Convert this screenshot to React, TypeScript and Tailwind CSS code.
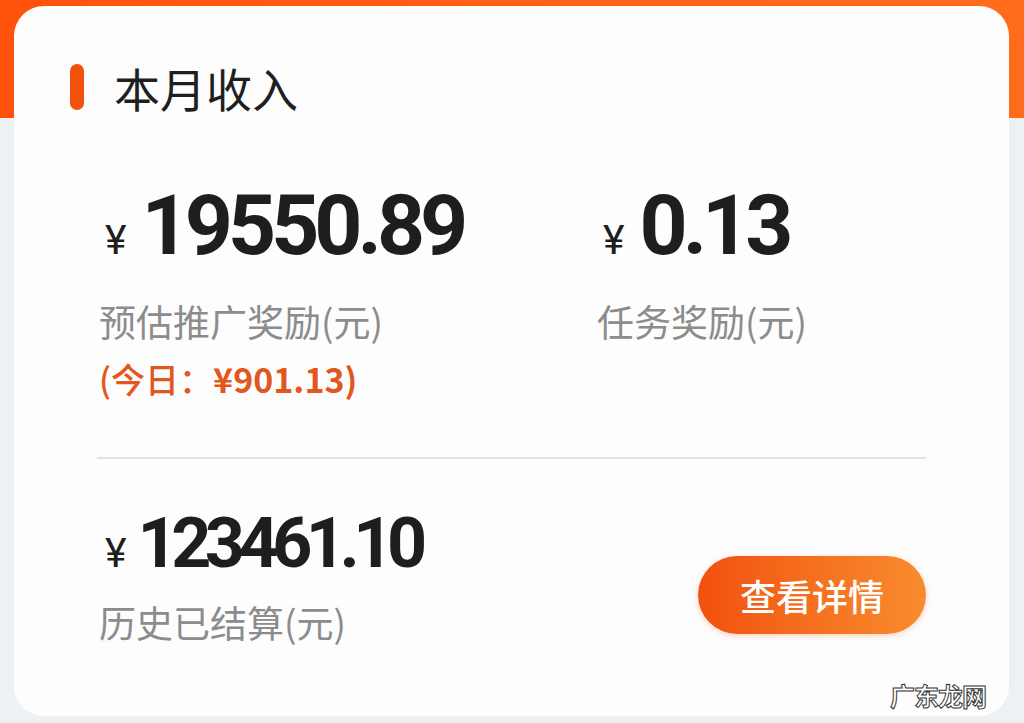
import React from "react";

const cjk = "font-['Noto_Sans_CJK_SC','Noto_Sans',sans-serif]";
const num = "font-['Roboto','Liberation_Sans',sans-serif]";

const Amount: React.FC<{ value: string; size: "lg" | "md" }> = ({ value, size }) => (
  <div className="flex items-baseline text-[#1e1e1e]">
    <span className={`${num} ml-[8px] text-[41px] leading-none font-normal`}>¥</span>
    <span
      className={
        size === "lg"
          ? `${num} ml-[15px] text-[84px] leading-[84px] font-bold tracking-[-5px]`
          : `${num} ml-[11px] text-[70px] leading-[70px] font-bold tracking-[-6.5px]`
      }
    >
      {value}
    </span>
  </div>
);

const Label: React.FC<{ children: React.ReactNode }> = ({ children }) => (
  <div className={`${cjk} text-[37px] leading-[40px] text-[#8c8c8c]`}>{children}</div>
);

const App: React.FC = () => {
  return (
    <div className="relative w-[1024px] h-[723px] overflow-hidden bg-[#eef1f3]">
      <div className="absolute inset-x-0 top-0 h-[118px] bg-gradient-to-r from-[#ff520a] to-[#ff6c1c]" />
      <div className="relative pt-[6px] pl-[14px] pr-[15px]">
        <div className="h-[710px] rounded-[30px] bg-[#fdfdfd] pl-[83px] pr-[83px] pt-[58px]">
          {/* 标题 */}
          <div className="flex items-center -ml-[27px] h-[46px]">
            <div className="w-[14px] h-[46px] rounded-full bg-[#f1510c]" />
            <h1 className={`${cjk} ml-[30px] text-[46px] leading-[46px] font-normal text-[#1f1f1f]`}>
              本月收入
            </h1>
          </div>

          <div className="grid grid-cols-[498px_1fr] mt-[74px]">
            <div>
              <Amount value="19550.89" size="lg" />
              <div className="mt-[33px] pl-[2px]">
                <Label>预估推广奖励(元)</Label>
              </div>
              <div className={`${cjk} mt-[18px] pl-[2px] text-[34px] leading-[40px] text-[#e2571d]`}>
                <span className="font-medium">(今日：</span>
                <span className="font-bold">¥901.13)</span>
              </div>
            </div>
            <div>
              <Amount value="0.13" size="lg" />
              <div className="mt-[33px] pl-[2px]">
                <Label>任务奖励(元)</Label>
              </div>
            </div>
          </div>

          <div className="mt-[58px] h-[2px] bg-[#e2e2e2]" />

          <div className="flex items-start justify-between mt-[49px]">
            <div>
              <Amount value="123461.10" size="md" />
              <div className="mt-[24px] pl-[2px]">
                <Label>历史已结算(元)</Label>
              </div>
            </div>
            <button
              className={`${cjk} mt-[48px] w-[228px] h-[78px] rounded-full bg-gradient-to-r from-[#f1500d] to-[#f88b2e] text-white text-[36px] leading-none font-medium shadow-[0_2px_6px_rgba(240,90,20,0.25)]`}
            >
              查看详情
            </button>
          </div>
        </div>
      </div>

      {/* 水印 */}
      <div
        className={`${cjk} absolute right-[38px] bottom-[15px] text-[25px] leading-none font-bold text-white [-webkit-text-stroke:1px_#333] tracking-[-1px]`}
      >
        广东龙网
      </div>
    </div>
  );
};

export default App;
